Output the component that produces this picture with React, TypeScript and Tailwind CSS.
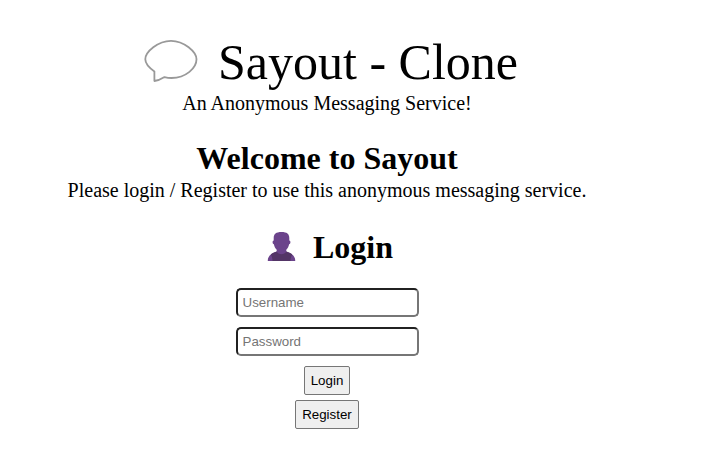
function SpeechBalloon() {
  return (
    <svg className="h-[46px] w-[56px] shrink-0 -translate-x-[1px] -translate-y-[1px]" viewBox="0 0 56 46" fill="none" stroke="#999999" strokeWidth="1.8" strokeLinejoin="round">
      <path d="M28 2.8C41 2.8 53.5 14 53.5 21.3C53.5 30 43 40 28.5 40Q25 40 21.5 39.1Q16 42.6 11.4 43L11.4 33.5C6.5 30 2.3 26 2.3 21.3C2.3 14 15 2.8 28 2.8Z" />
    </svg>
  );
}

function Person() {
  return (
    <svg className="h-[30px] w-[28px] shrink-0 -translate-x-[0.5px] -translate-y-[1px]" viewBox="0 0 28 30">
      <path fill="#6b438b" d="M0 30C.5 24.8 3.5 22.5 9.2 20.5V18.8C7.6 17.4 6.8 15.2 6.4 13.3C4.6 12.8 4.8 9.6 6.2 9.5V7C6.2 3 8.5 1 14 1S21.8 3 21.8 7V9.5C23.2 9.6 23.4 12.8 21.6 13.3C21.2 15.2 20.4 17.4 18.8 18.8V20.5C24.5 22.5 27.5 24.8 28 30Z" />
      <path fill="#533566" d="M5 30C5 27 4 24.5 3.2 23.3Q5.5 21.6 9.2 20.5C11 24.2 17 24.2 18.8 20.5Q22.5 21.6 24.8 23.3C24 24.5 23 27 23 30Z" />
    </svg>
  );
}

export default function App() {
  return (
    <main className="flex h-[468px] w-[654px] flex-col items-center bg-white pt-[33px] font-['Liberation_Serif','Times_New_Roman',serif] text-black">
      <header className="flex flex-col items-center">
        <div className="flex h-[58px] items-center pl-[8px]">
          <SpeechBalloon />
          <h1 className="ml-[18px] whitespace-nowrap text-[50px] leading-[58px]">Sayout - Clone</h1>
        </div>
        <p className="mt-[1px] text-[20px] leading-[23px]">An Anonymous Messaging Service!</p>
      </header>
      <h2 className="mt-[25px] text-[32px] leading-[36px] font-bold">Welcome to Sayout</h2>
      <p className="mt-[3px] whitespace-nowrap text-[20px] leading-[23px]">Please login / Register to use this anonymous messaging service.</p>
      <div className="mt-[27px] flex h-[36px] items-center pl-[7px]">
        <Person />
        <h2 className="ml-[17px] text-[32px] leading-[36px] font-bold">Login</h2>
      </div>
      <form className="mt-[23px] flex flex-col items-center font-['Liberation_Sans',Arial,sans-serif] text-[13.333px]" onSubmit={(e) => e.preventDefault()}>
        <input aria-label="Username" placeholder="Username" className="h-[29px] w-[183px] rounded-[5px] border-2 border-t-[#212121] border-r-[#767676] border-b-[#767676] border-l-[#212121] px-[5px] placeholder:text-[#757575]" />
        <input aria-label="Password" type="password" placeholder="Password" className="mt-[10px] h-[29px] w-[183px] rounded-[5px] border-2 border-t-[#212121] border-r-[#767676] border-b-[#767676] border-l-[#212121] px-[5px] placeholder:text-[#757575]" />
        <button className="mt-[10px] h-[29px] w-[46px] rounded-[2px] border border-[#767676] bg-[#efefef]">Login</button>
        <button className="mt-[5px] h-[29px] w-[64px] rounded-[2px] border border-[#767676] bg-[#efefef]">Register</button>
      </form>
    </main>
  );
}
